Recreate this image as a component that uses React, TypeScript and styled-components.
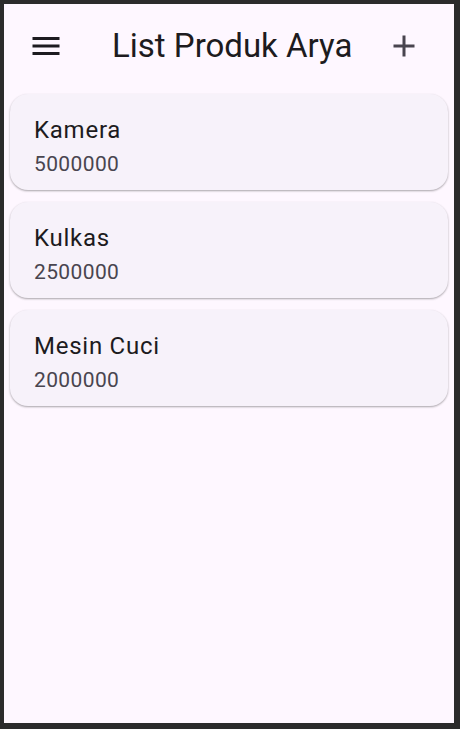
import React from "react";
import styled, { createGlobalStyle } from "styled-components";

const GlobalStyle = createGlobalStyle`
  html, body { margin: 0; padding: 0; background: #2b2b2b; }
  body { font-family: Roboto, "Noto Sans", Arial, sans-serif; }
  * { box-sizing: border-box; }
`;

const Frame = styled.div`
  width: 460px;
  height: 729px;
  background: #2b2b2b;
  padding: 4px 6px 6px 4px;
  display: flex;
`;

const Screen = styled.div`
  flex: 1;
  background: #fef7ff;
  display: flex;
  flex-direction: column;
`;

const AppBar = styled.header`
  height: 84px;
  display: flex;
  align-items: center;
`;

const Leading = styled.div`
  width: 84px;
  height: 84px;
  display: flex;
  align-items: center;
  justify-content: center;
  color: #1d1b20;
`;

const Title = styled.h1`
  flex: 1;
  margin: 0 0 0 24px;
  font-family: Roboto, sans-serif;
  font-weight: 400;
  font-size: 33px;
  line-height: 42px;
  color: #1d1b20;
  white-space: nowrap;
`;

const Actions = styled.div`
  display: flex;
  align-items: center;
  padding-right: 14px;
`;

const IconButton = styled.button<{ $color: string }>`
  width: 72px;
  height: 72px;
  border: none;
  background: transparent;
  padding: 0;
  display: flex;
  align-items: center;
  justify-content: center;
  color: ${(p) => p.$color};
`;

const List = styled.main`
  display: flex;
  flex-direction: column;
  gap: 12px;
  padding: 6px;
`;

const Card = styled.div`
  height: 96px;
  border-radius: 18px;
  background: #f7f2fa;
  box-shadow: 0 1px 2px rgba(0, 0, 0, 0.28), 0 1px 3px rgba(0, 0, 0, 0.08);
  padding: 18px 24px 12px;
  display: flex;
  flex-direction: column;
  justify-content: center;
`;

const ItemTitle = styled.div`
  font-size: 24px;
  line-height: 36px;
  letter-spacing: 0.75px;
  color: #1d1b20;
`;

const ItemSubtitle = styled.div`
  font-size: 21px;
  line-height: 30px;
  margin-top: 1px;
  letter-spacing: 0.375px;
  color: #49454f;
`;

const MenuIcon = () => (
  <svg width="36" height="36" viewBox="0 0 24 24" fill="currentColor">
    <path d="M3 18h18v-2H3v2zm0-5h18v-2H3v2zm0-7v2h18V6H3z" />
  </svg>
);

const AddIcon = () => (
  <svg width="36" height="36" viewBox="0 0 24 24" fill="currentColor">
    <path d="M19 13h-6v6h-2v-6H5v-2h6V5h2v6h6v2z" />
  </svg>
);

const products = [
  { name: "Kamera", price: 5000000 },
  { name: "Kulkas", price: 2500000 },
  { name: "Mesin Cuci", price: 2000000 },
];

export default function App() {
  return (
    <>
      <GlobalStyle />
      <Frame>
        <Screen>
          <AppBar>
            <Leading>
              <MenuIcon />
            </Leading>
            <Title>List Produk Arya</Title>
            <Actions>
              <IconButton $color="#49454f">
                <AddIcon />
              </IconButton>
            </Actions>
          </AppBar>
          <List>
            {products.map((p) => (
              <Card key={p.name}>
                <ItemTitle>{p.name}</ItemTitle>
                <ItemSubtitle>{p.price}</ItemSubtitle>
              </Card>
            ))}
          </List>
        </Screen>
      </Frame>
    </>
  );
}
